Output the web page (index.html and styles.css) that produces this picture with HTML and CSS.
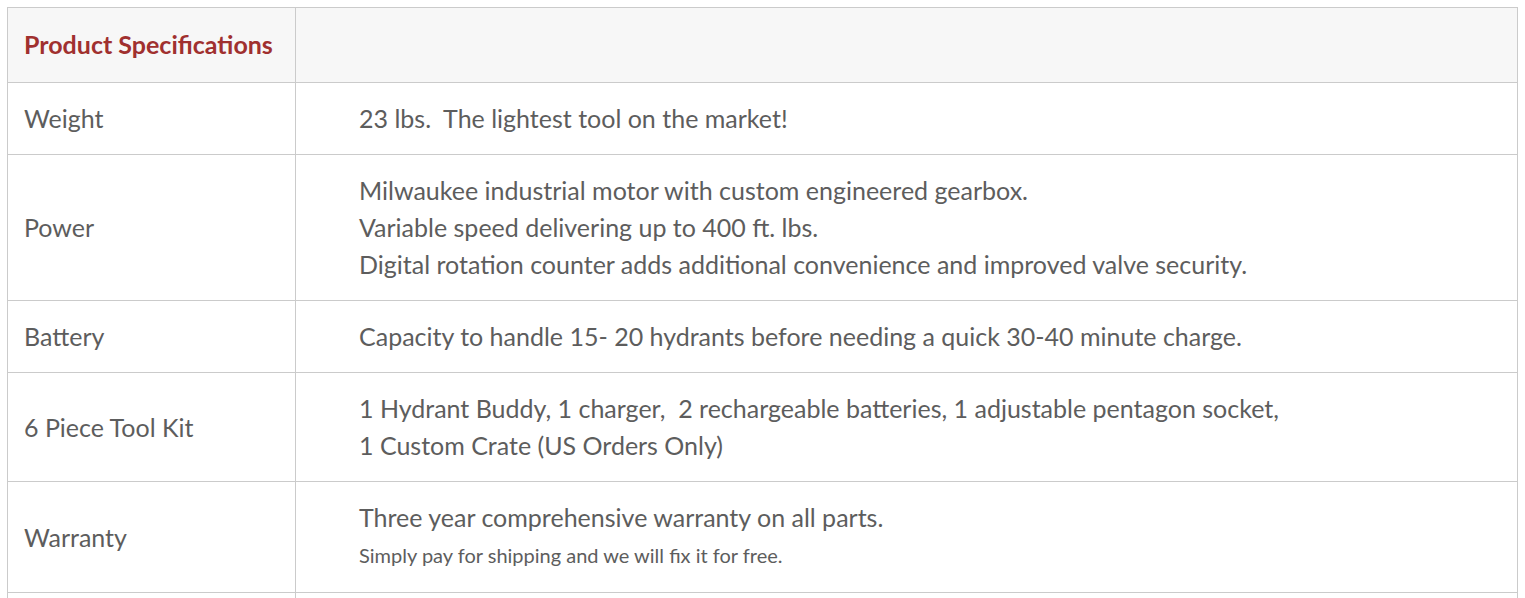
FILE: index.html
```html
<!DOCTYPE html>
<html lang="en">
<head>
<meta charset="utf-8">
<title>Product Specifications</title>
<link rel="stylesheet" href="styles.css">
</head>
<body>
<table class="specs">
  <thead>
    <tr>
      <th class="label-col">Product Specifications</th>
      <th class="value-col"></th>
    </tr>
  </thead>
  <tbody>
    <tr>
      <td class="label-col">Weight</td>
      <td class="value-col">23 lbs.&nbsp; The lightest tool on the market!</td>
    </tr>
    <tr>
      <td class="label-col">Power</td>
      <td class="value-col">Milwaukee industrial motor with custom engineered gearbox.<br>Variable speed delivering up to 400 ft. lbs.<br>Digital rotation counter adds additional convenience and improved valve security.</td>
    </tr>
    <tr>
      <td class="label-col">Battery</td>
      <td class="value-col">Capacity to handle 15- 20 hydrants before needing a quick 30-40 minute charge.</td>
    </tr>
    <tr>
      <td class="label-col">6 Piece Tool Kit</td>
      <td class="value-col">1 Hydrant Buddy, 1 charger,&nbsp; 2 rechargeable batteries, 1 adjustable pentagon socket,<br>1 Custom Crate (US Orders Only)</td>
    </tr>
    <tr>
      <td class="label-col">Warranty</td>
      <td class="value-col">Three year comprehensive warranty on all parts.<span class="note">Simply pay for shipping and we will fix it for free.</span></td>
    </tr>
    <tr>
      <td class="label-col">&nbsp;</td>
      <td class="value-col">&nbsp;</td>
    </tr>
  </tbody>
</table>
</body>
</html>
```
FILE: styles.css
```css
html, body {
  background: #ffffff;
}
body {
  margin: 7px 0 0 7px;
  font-family: Lato, "Open Sans", "Liberation Sans", sans-serif;
  color: #5d5d5d;
}
.specs {
  width: 1511px;
  border-collapse: collapse;
  font-size: 25px;
  line-height: 37px;
}
.specs th,
.specs td {
  border: 1px solid #cbcbcb;
  text-align: left;
  vertical-align: middle;
  padding: 17px 16px;
}
.specs thead th {
  background: #f7f7f7;
  color: #a0302f;
  font-weight: 700;
  padding-top: 18px;
  padding-bottom: 19px;
}
.specs .label-col {
  width: 255px;
}
.specs td.value-col {
  padding-left: 63px;
}
.note {
  display: block;
  font-size: 20px;
  line-height: 39px;
}
```
